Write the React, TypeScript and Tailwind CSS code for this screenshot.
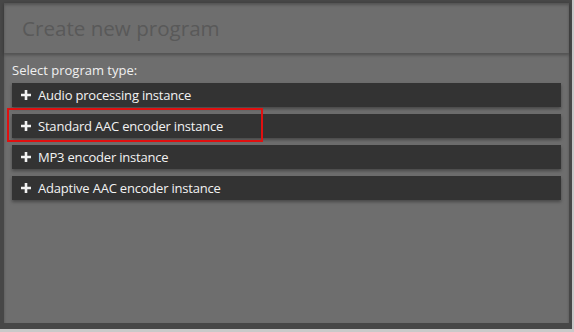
import React from "react";

const items = [
  "Audio processing instance",
  "Standard AAC encoder instance",
  "MP3 encoder instance",
  "Adaptive AAC encoder instance",
];

function Plus() {
  return (
    <svg width="10" height="10" viewBox="0 0 10 10" className="shrink-0">
      <path d="M5 0v10M0 5h10" stroke="#f2f2f2" strokeWidth="2.6" />
    </svg>
  );
}

export default function App() {
  return (
    <div
      className="w-[574px] h-[332px] bg-[#c9c9c9]"
      style={{ fontFamily: '"Open Sans", "Noto Sans", sans-serif' }}
    >
      <div className="w-[572px] h-[329px] bg-[#474747] pl-[4px] pt-[3px] pr-[3px] pb-[6px]">
        <div className="h-full bg-[#6e6e6e] flex flex-col shadow-[inset_0_2px_3px_rgba(0,0,0,0.25)]">
          <div className="h-[51px] shrink-0 flex items-center pl-[18px] border-b border-[#555555] shadow-[0_1px_3px_rgba(0,0,0,0.3)]">
            <span className="text-[20.6px] leading-[28px] text-[#595959]">Create new program</span>
          </div>
          <div className="flex flex-col px-[8px] pt-[7px]">
            <div className="text-[13px] leading-[18px] text-[#f0f0f0]">Select program type:</div>
            <div className="flex flex-col gap-[7px] mt-[4px]">
              {items.map((t, i) => (
                <div
                  key={t}
                  className="relative h-[24px] bg-[#333333] flex items-center pl-[9px] gap-[7px] shadow-[0_2px_3px_rgba(0,0,0,0.35)]"
                >
                  <Plus />
                  <span className="text-[13px] leading-[24px] tracking-[-0.2px] text-[#f2f2f2]">{t}</span>
                  {i === 1 && (
                    <div className="absolute left-[-5px] top-[-6px] w-[256px] h-[34px] border-2 border-[#e01010] pointer-events-none" />
                  )}
                </div>
              ))}
            </div>
          </div>
        </div>
      </div>
    </div>
  );
}
